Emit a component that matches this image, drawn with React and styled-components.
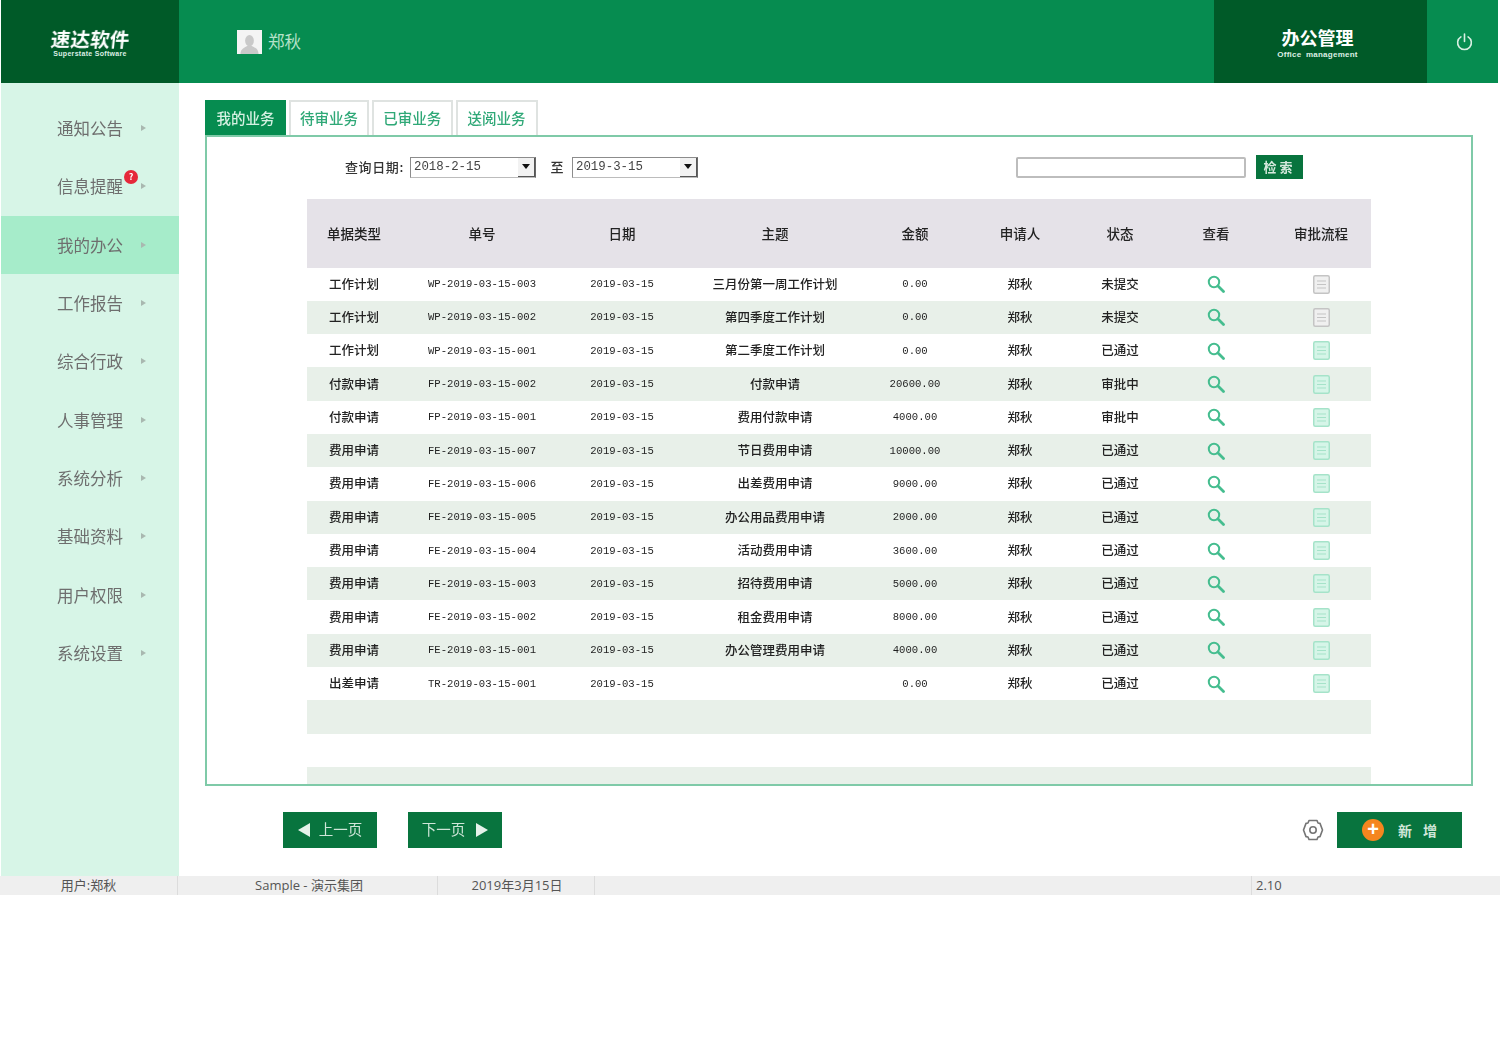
import React from "react";
import styled, { createGlobalStyle } from "styled-components";

const CJK = `"Noto Sans CJK SC", "Liberation Sans", sans-serif`;
const MONO = `"Liberation Mono", "Noto Sans CJK SC", monospace`;

const GlobalStyle = createGlobalStyle`
    body {
        margin: 0;
        background: #fff;
        font-family: ${CJK};
    }
`;

const Shell = styled.div`
    width: 1500px;
    height: 895px;
    display: flex;
    flex-direction: column;
    filter: blur(0.6px);
`;

const Header = styled.header`
    height: 83px;
    margin: 0 2px 0 1px;
    display: flex;
    background: #068c50;
    flex-shrink: 0;
`;

const Logo = styled.div`
    width: 178px;
    background: #005a28;
    display: flex;
    flex-direction: column;
    align-items: center;
    justify-content: center;
    color: #fff;
    padding-top: 2px;
    box-sizing: border-box;
`;

const LogoTitle = styled.div`
    font-size: 19.5px;
    line-height: 23px;
    font-weight: 700;
    letter-spacing: 0.2px;
    transform: skewX(-6deg);
`;

const LogoSub = styled.div`
    font-family: "Liberation Sans", sans-serif;
    font-size: 7px;
    line-height: 8px;
    font-weight: 700;
    letter-spacing: 0.3px;
    color: #dcefe4;
`;

const User = styled.div`
    flex: 1;
    display: flex;
    align-items: center;
    padding-left: 58px;
    gap: 6px;
    color: #b6e2c9;
    font-size: 16.5px;
`;

const UserName = styled.span`
    padding-bottom: 2px;
`;

const Avatar = styled.div`
    width: 25px;
    height: 24px;
    background: #f4f4f4;
    display: flex;
    align-items: flex-end;
    justify-content: center;
`;

const Module = styled.div`
    width: 213px;
    padding: 2px 6px 0 0;
    box-sizing: border-box;
    background: #005a28;
    color: #fff;
    display: flex;
    flex-direction: column;
    align-items: center;
    justify-content: center;
`;

const ModuleTitle = styled.div`
    font-size: 18px;
    line-height: 24px;
    font-weight: 700;
`;

const ModuleSub = styled.div`
    font-family: "Liberation Sans", sans-serif;
    font-size: 8px;
    line-height: 12px;
    font-weight: 700;
    word-spacing: 2px;
    letter-spacing: 0.25px;
    color: #dcefe4;
`;

const PowerCell = styled.div`
    width: 71px;
    padding-left: 3px;
    box-sizing: border-box;
    display: flex;
    align-items: center;
    justify-content: center;
`;

const Body = styled.div`
    flex: 1;
    display: flex;
    min-height: 0;
`;

const Sidebar = styled.nav`
    width: 178px;
    margin-left: 1px;
    padding-top: 16px;
    background: #d7f5e7;
    box-sizing: border-box;
`;

const NavItem = styled.div`
    position: relative;
    height: 58.33px;
    padding-left: 56px;
    display: flex;
    align-items: center;
    gap: 18px;
    color: #6e6e6e;
    font-size: 16.5px;
    background: ${props => (props.$active ? "#a6ecca" : "transparent")};
`;

const NavArrow = styled.span`
    width: 0;
    height: 0;
    border-left: 5px solid #a9b8b0;
    border-top: 3px solid transparent;
    border-bottom: 3px solid transparent;
`;

const Badge = styled.span`
    position: absolute;
    left: 123px;
    top: 13px;
    width: 14px;
    height: 14px;
    border-radius: 50%;
    background: #e5283a;
    color: #fff;
    font-size: 9px;
    line-height: 14px;
    text-align: center;
    font-weight: 700;
`;

const Main = styled.main`
    flex: 1;
    padding: 17px 27px 0 26px;
    box-sizing: border-box;
    min-width: 0;
`;

const Tabs = styled.div`
    display: flex;
    gap: 3px;
    height: 35px;
`;

const Tab = styled.div`
    width: ${props => props.$width}px;
    box-sizing: border-box;
    padding-bottom: 3px;
    display: flex;
    align-items: center;
    justify-content: center;
    font-size: 14.5px;
    font-weight: 500;
    background: ${props => (props.$active ? "#068c50" : "#fff")};
    color: ${props => (props.$active ? "#d6f1e2" : "#2fa877")};
    border: 2px solid ${props => (props.$active ? "#068c50" : "#dfe3e1")};
    border-bottom: 0;
`;

const Panel = styled.section`
    height: 651px;
    box-sizing: border-box;
    border: 2px solid #7fcaa8;
    overflow: hidden;
`;

const Filters = styled.div`
    height: 62px;
    padding: 0 168px 2px 138px;
    box-sizing: border-box;
    display: flex;
    align-items: center;
    font-size: 13px;
    font-weight: 500;
    color: #333;
`;

const FilterLabel = styled.span`
    width: 65px;
    padding-bottom: 1px;
    white-space: nowrap;
    letter-spacing: 0.6px;
`;

const DateBox = styled.div`
    width: 126px;
    height: 21px;
    box-sizing: border-box;
    display: flex;
    align-items: center;
    justify-content: space-between;
    padding-left: 3px;
    border: 1px solid #8c8c8c;
    border-right-color: #666;
    border-bottom-color: #bcbcbc;
    font-family: ${MONO};
    font-size: 12.4px;
    font-weight: 400;
    color: #444;
`;

const DateArrow = styled.span`
    width: 17px;
    height: 19px;
    box-sizing: border-box;
    background: #f2f2f2;
    border-right: 1px solid #555;
    border-bottom: 1px solid #555;
    display: flex;
    align-items: center;
    justify-content: center;
    &::before {
        content: "";
        border-top: 5px solid #111;
        border-left: 4px solid transparent;
        border-right: 4px solid transparent;
    }
`;

const To = styled.span`
    width: 36px;
    padding: 0 0 1px 6px;
    box-sizing: border-box;
    text-align: center;
`;

const Spacer = styled.div`
    flex: 1;
`;

const SearchInput = styled.div`
    width: 230px;
    height: 21px;
    box-sizing: border-box;
    border: 2px solid #bdbdbd;
    border-radius: 2px;
    background: #fff;
`;

const SearchButton = styled.div`
    width: 47px;
    height: 24px;
    margin-left: 10px;
    padding-bottom: 2px;
    box-sizing: border-box;
    background: #08743e;
    color: #d6e9dd;
    font-size: 13px;
    font-weight: 700;
    letter-spacing: 3px;
    display: flex;
    align-items: center;
    justify-content: center;
`;

const Table = styled.div`
    width: 1064px;
    margin-left: 100px;
`;

const COLUMNS = "94px 162px 118px 188px 92px 118px 82px 110px 100px";

const HeadRow = styled.div`
    display: grid;
    grid-template-columns: ${COLUMNS};
    height: 68.5px;
    align-items: center;
    background: #e5e2e8;
    color: #222;
    font-size: 13.5px;
    font-weight: 500;
    text-align: center;
`;

const Row = styled.div`
    display: grid;
    grid-template-columns: ${COLUMNS};
    height: 33.3px;
    align-items: center;
    background: ${props => (props.$shaded ? "#e8f0e9" : "#fff")};
    color: #222;
    font-size: 12.5px;
    font-weight: 500;
    text-align: center;
`;

const TextCell = styled.div`
    padding-bottom: 2px;
`;

const MonoCell = styled.div`
    font-family: ${MONO};
    font-size: 10.6px;
    font-weight: 400;
    color: #1f1f1f;
`;

const IconCell = styled.div`
    display: flex;
    align-items: center;
    justify-content: center;
`;

const PagerBar = styled.div`
    margin-top: 26px;
    padding: 0 11px 0 78px;
    display: flex;
    align-items: center;
`;

const PagerButton = styled.div`
    width: 94px;
    height: 36px;
    margin-right: 31px;
    padding-bottom: 3px;
    box-sizing: border-box;
    background: #08743e;
    color: #cfe6d8;
    font-size: 14.5px;
    display: flex;
    align-items: center;
    justify-content: center;
    gap: ${props => props.$gap}px;
`;

const PagerArrow = styled.svg`
    margin-top: 3px;
`;

const GearSlot = styled.div`
    display: flex;
    margin-right: 13px;
`;

const AddButton = styled.div`
    width: 125px;
    height: 36px;
    padding-left: 25px;
    box-sizing: border-box;
    background: #08743e;
    color: #cfe6d8;
    font-size: 14px;
    font-weight: 700;
    display: flex;
    align-items: center;
    gap: 14px;
`;

const AddLabel = styled.span`
    letter-spacing: 11px;
    padding-bottom: 1px;
`;

const PlusDisc = styled.span`
    width: 22px;
    height: 22px;
    border-radius: 50%;
    background: #f5861f;
    color: #fff;
    font-size: 20px;
    line-height: 21px;
    font-weight: 700;
    text-align: center;
    font-family: "Liberation Sans", sans-serif;
`;

const Footer = styled.footer`
    height: 19px;
    flex-shrink: 0;
    background: #efefef;
    display: flex;
    color: #555;
    font-size: 13px;
    line-height: 19px;
`;

const FooterCell = styled.div`
    width: ${props => props.$width}px;
    box-sizing: border-box;
    flex: ${props => (props.$width ? "none" : "1")};
    border-right: ${props => (props.$last ? "0" : "1px solid #dcdcdc")};
    text-align: ${props => (props.$left ? "left" : "center")};
    padding-left: ${props => (props.$left ? "4px" : `${props.$indent || 0}px`)};
    font-family: "Open Sans", "Noto Sans CJK SC", sans-serif;
    white-space: nowrap;
`;

const NAV = ["通知公告", "信息提醒", "我的办公", "工作报告", "综合行政", "人事管理", "系统分析", "基础资料", "用户权限", "系统设置"];

const TABS = [["我的业务", 81], ["待审业务", 80], ["已审业务", 80.5], ["送阅业务", 82]];

const HEADS = ["单据类型", "单号", "日期", "主题", "金额", "申请人", "状态", "查看", "审批流程"];

const ROWS = [
    ["工作计划", "WP-2019-03-15-003", "三月份第一周工作计划", "0.00", "未提交"],
    ["工作计划", "WP-2019-03-15-002", "第四季度工作计划", "0.00", "未提交"],
    ["工作计划", "WP-2019-03-15-001", "第二季度工作计划", "0.00", "已通过"],
    ["付款申请", "FP-2019-03-15-002", "付款申请", "20600.00", "审批中"],
    ["付款申请", "FP-2019-03-15-001", "费用付款申请", "4000.00", "审批中"],
    ["费用申请", "FE-2019-03-15-007", "节日费用申请", "10000.00", "已通过"],
    ["费用申请", "FE-2019-03-15-006", "出差费用申请", "9000.00", "已通过"],
    ["费用申请", "FE-2019-03-15-005", "办公用品费用申请", "2000.00", "已通过"],
    ["费用申请", "FE-2019-03-15-004", "活动费用申请", "3600.00", "已通过"],
    ["费用申请", "FE-2019-03-15-003", "招待费用申请", "5000.00", "已通过"],
    ["费用申请", "FE-2019-03-15-002", "租金费用申请", "8000.00", "已通过"],
    ["费用申请", "FE-2019-03-15-001", "办公管理费用申请", "4000.00", "已通过"],
    ["出差申请", "TR-2019-03-15-001", "", "0.00", "已通过"],
];

const PersonIcon = () => (
    <svg width="19" height="20" viewBox="0 0 19 21">
        <ellipse cx="9.5" cy="7" rx="4.6" ry="6" fill="#c9c9c9" />
        <path d="M0 21 C0 15 5 14 7 12.5 H12 C14 14 19 15 19 21 Z" fill="#c9c9c9" />
    </svg>
);

const PowerIcon = () => (
    <svg width="17" height="18" viewBox="0 0 16 17" fill="none" stroke="#d8f0e3" strokeWidth="1.5" strokeLinecap="round">
        <path d="M4.6 3.6 A6.5 6.5 0 1 0 11.4 3.6" />
        <path d="M8 1 V8" />
    </svg>
);

const SearchIcon = () => (
    <svg width="18" height="18" viewBox="0 0 18 18" fill="none" stroke="#45bd8f">
        <circle cx="7" cy="7" r="5.2" strokeWidth="2" />
        <path d="M11 11 L16.5 16.5" strokeWidth="2.8" strokeLinecap="round" />
    </svg>
);

const DocIcon = ({ done }) => {
    const fill = done ? "#d6f5e8" : "#f0f0f0";
    const line = done ? "#a5e3c9" : "#c4c4c4";
    return (
        <svg width="17" height="19" viewBox="0 0 17 19" fill={fill} stroke={line}>
            <rect x="0.75" y="0.75" width="15.5" height="17.5" rx="1.5" strokeWidth="1.5" />
            <path d="M4 6 H13 M4 9.5 H13 M4 13 H13" strokeWidth="1" />
        </svg>
    );
};

const GearIcon = () => (
    <svg width="22" height="22" viewBox="0 0 22 22" fill="none" stroke="#757575" strokeWidth="1.6" strokeLinejoin="round">
        <path d="M7 1.5 H15 L16 4 L18 4.4 L20.5 11 L18 17.6 L16 18 L15 20.5 H7 L6 18 L4 17.6 L1.5 11 L4 4.4 L6 4 Z" />
        <circle cx="11" cy="11" r="3.2" />
    </svg>
);

const LeftTriangle = () => (
    <PagerArrow width="12" height="14" viewBox="0 0 12 14"><path d="M12 0 V14 L0 7 Z" fill="#e4f2ea" /></PagerArrow>
);

const RightTriangle = () => (
    <PagerArrow width="12" height="14" viewBox="0 0 12 14"><path d="M0 0 V14 L12 7 Z" fill="#e4f2ea" /></PagerArrow>
);

export default function App() {
    return (
        <Shell>
            <GlobalStyle />
            <Header>
                <Logo>
                    <LogoTitle>速达软件</LogoTitle>
                    <LogoSub>Superstate Software</LogoSub>
                </Logo>
                <User>
                    <Avatar><PersonIcon /></Avatar>
                    <UserName>郑秋</UserName>
                </User>
                <Module>
                    <ModuleTitle>办公管理</ModuleTitle>
                    <ModuleSub>Office management</ModuleSub>
                </Module>
                <PowerCell><PowerIcon /></PowerCell>
            </Header>
            <Body>
                <Sidebar>
                    {NAV.map((name, i) => (
                        <NavItem key={name} $active={i === 2}>
                            {name}
                            <NavArrow />
                            {i === 1 && <Badge>?</Badge>}
                        </NavItem>
                    ))}
                </Sidebar>
                <Main>
                    <Tabs>
                        {TABS.map(([name, width], i) => (
                            <Tab key={name} $width={width} $active={i === 0}>{name}</Tab>
                        ))}
                    </Tabs>
                    <Panel>
                        <Filters>
                            <FilterLabel>查询日期:</FilterLabel>
                            <DateBox>2018-2-15<DateArrow /></DateBox>
                            <To>至</To>
                            <DateBox>2019-3-15<DateArrow /></DateBox>
                            <Spacer />
                            <SearchInput />
                            <SearchButton>检索</SearchButton>
                        </Filters>
                        <Table>
                            <HeadRow>
                                {HEADS.map(h => <div key={h}>{h}</div>)}
                            </HeadRow>
                            {ROWS.map((row, i) => (
                                <Row key={row[1]} $shaded={i % 2 === 1}>
                                    <TextCell>{row[0]}</TextCell>
                                    <MonoCell>{row[1]}</MonoCell>
                                    <MonoCell>2019-03-15</MonoCell>
                                    <TextCell>{row[2]}</TextCell>
                                    <MonoCell>{row[3]}</MonoCell>
                                    <TextCell>郑秋</TextCell>
                                    <TextCell>{row[4]}</TextCell>
                                    <IconCell><SearchIcon /></IconCell>
                                    <IconCell><DocIcon done={i > 1} /></IconCell>
                                </Row>
                            ))}
                            <Row $shaded />
                            <Row />
                            <Row $shaded />
                        </Table>
                    </Panel>
                    <PagerBar>
                        <PagerButton $gap={9}><LeftTriangle />上一页</PagerButton>
                        <PagerButton $gap={11}>下一页<RightTriangle /></PagerButton>
                        <Spacer />
                        <GearSlot><GearIcon /></GearSlot>
                        <AddButton><PlusDisc>+</PlusDisc><AddLabel>新增</AddLabel></AddButton>
                    </PagerBar>
                </Main>
            </Body>
            <Footer>
                <FooterCell $width={178}>用户:郑秋</FooterCell>
                <FooterCell $width={260} $indent={3}>Sample - 演示集团</FooterCell>
                <FooterCell $width={157} $indent={2}>2019年3月15日</FooterCell>
                <FooterCell $width={657} />
                <FooterCell $left $last>2.10</FooterCell>
            </Footer>
        </Shell>
    );
}
